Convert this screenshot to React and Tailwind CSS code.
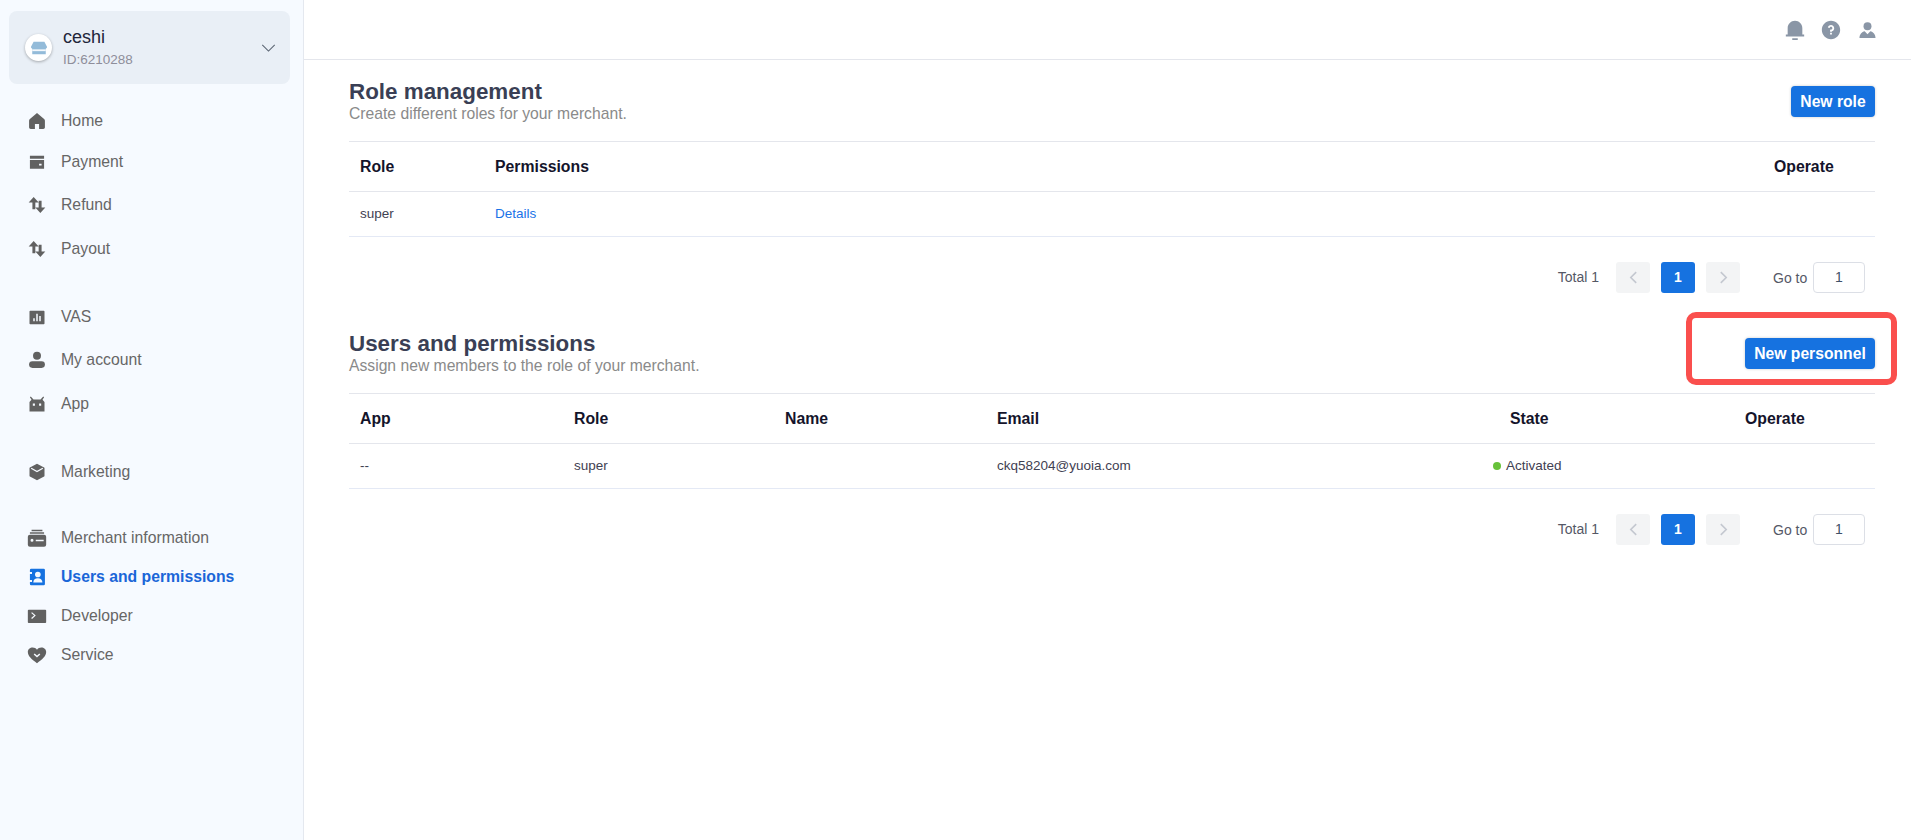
import React from "react";
import { RiBarChartBoxFill, RiNotification3Fill, RiQuestionFill } from "react-icons/ri";

const I = ({ children }) => (
  <svg viewBox="0 0 24 24" width="20" height="20" fill="currentColor" className="shrink-0">{children}</svg>
);
const HomeIcon = () => (
  <I><path d="M12 2.500L3.500 9.500C2.800 10.100 2.500 10.800 2.500 11.700V19.500C2.500 20.600 3.400 21.500 4.500 21.500H9.500V15.500H14.500V21.500H19.500C20.600 21.500 21.500 20.600 21.500 19.500V11.700C21.500 10.800 21.200 10.100 20.500 9.500z" /></I>
);
const WalletIcon = () => (
  <I><path fillRule="evenodd" d="M3.500 4.500h17v3.500h-17zM3.500 9.500h17V20h-17zM14.500 14h3v2.200h-3z" /></I>
);
const ArrowsIcon = () => (
  <I><path d="M8 2.500l6 6.500h-4v8H6.500V9H2zM16 21.500l-6-6.500h4V7h3.500v8H22z" /></I>
);
const PersonIcon = () => (
  <I><circle cx="12" cy="7" r="4.800" /><rect x="2.500" y="13.500" width="19" height="8" rx="4" /></I>
);
const AndroidIcon = () => (
  <I><path fillRule="evenodd" d="M4.500 3l3.300 3.500h8.400L19.500 3l1 .8L18.600 7 21 9.500V21H3V9.500L5.400 7 3.500 3.800zM7 11.500v2.500h2.500v-2.500zM14.500 11.500v2.500H17v-2.500z" /></I>
);
const BoxIcon = () => (
  <I>
    <path d="M12 2l8.500 4.600a1 1 0 0 1 .5.900v9a1 1 0 0 1-.5.900L12 22l-8.500-4.600a1 1 0 0 1-.5-.900v-9a1 1 0 0 1 .5-.900z" />
    <path d="M5 7.500l7 4 7-4" fill="none" stroke="#f6faff" strokeWidth="1.600" />
  </I>
);
const MerchantIcon = () => (
  <I><path fillRule="evenodd" d="M5.500 2h13v2h-13zM3.500 5h17v2h-17zM3.500 8h17A2.500 2.500 0 0 1 23 10.500V20a2.500 2.500 0 0 1-2.500 2.500h-17A2.500 2.500 0 0 1 1 20V10.500A2.500 2.500 0 0 1 3.500 8zM6 13a1.800 1.800 0 1 0 0 3.600A1.800 1.800 0 0 0 6 13zM10.500 14v1.800H20V14z" /></I>
);
const ContactsIcon = () => (
  <I>
    <path fillRule="evenodd" d="M5 2h15a1.500 1.500 0 0 1 1.500 1.500v17A1.500 1.500 0 0 1 20 22H5a1.500 1.500 0 0 1-1.500-1.500V18H6v-2.500H3.500v-7H6V6H3.500V3.500A1.500 1.500 0 0 1 5 2z" />
    <circle cx="13" cy="9" r="3.400" fill="#f6faff" />
    <path d="M7.500 18.500c0-3.200 2.400-5 5.500-5s5.500 1.800 5.500 5z" fill="#f6faff" />
  </I>
);
const TerminalIcon = () => (
  <I>
    <path fillRule="evenodd" d="M2 4.500h20a1 1 0 0 1 1 1v14a1 1 0 0 1-1 1H2a1 1 0 0 1-1-1v-14a1 1 0 0 1 1-1zM5 8.500l3.500 3-3.500 3 1 1 4.500-4-4.500-4z" />
  </I>
);
const HeartIcon = () => (
  <I><path fillRule="evenodd" d="M12 22C6 17.500 1 13.500 1 8.500 1 5 3.700 3 6.800 3c2.100 0 4 1 5.200 2.600C13.200 4 15.100 3 17.200 3 20.300 3 23 5 23 8.500 23 13.500 18 17.500 12 22zM8 11.500l4 3.500 4-3.500-1.200-1.300L12 12.600 9.200 10.200z" /></I>
);
const TopUser = () => (
  <svg viewBox="0 0 18 18" width="17" height="18" fill="currentColor">
    <circle cx="9" cy="5" r="4.200" />
    <path d="M0.500 17.500c0-4 2.500-6.500 5.500-7.300L9 13.500l3-3.300c3 .8 5.500 3.300 5.500 7.300z" />
  </svg>
);

const Row = ({ icon, label, active, className }) => (
  <div className={`flex items-center h-[24px] ${className || ""}`}>
    <span className="w-[61px] pl-[28px] shrink-0">
      <span className={`w-[18px] flex items-center justify-center ${active ? "text-[#1672e0]" : "text-[#616161]"}`}>{icon}</span>
    </span>
    <span className={`text-[15.75px] ${active ? "font-bold text-[#1a66d8]" : "text-[#666666]"}`}>{label}</span>
  </div>
);

const Sidebar = () => (
  <aside className="w-[304px] shrink-0 bg-[#f6faff] border-r border-[#e4e8ef] pt-[11px] min-h-[840px]">
    <div className="mx-[9px] w-[281px] h-[73px] rounded-[8px] bg-[#e9eff6] flex items-center pl-[16px] pr-[14px]">
      <div className="w-[27px] h-[27px] rounded-full bg-white shadow-[0_1px_3px_rgba(0,0,0,0.3)] flex items-center justify-center shrink-0">
        <svg viewBox="0 0 20 20" width="18" height="18" fill="#93bbd9">
          <path d="M4 3h12l3 6a2.300 2.300 0 0 1-1.500 1.800V17h-15v-6.200A2.300 2.300 0 0 1 1 9z" />
          <path d="M2.500 11.500h15v2h-15z" fill="#ffffff" opacity="0.9" />
        </svg>
      </div>
      <div className="ml-[11px] flex-1">
        <div className="text-[18px] leading-[22px] text-[#22253a]">ceshi</div>
        <div className="text-[13.5px] leading-[18px] mt-[3px] text-[#8e8e9a]">ID:6210288</div>
      </div>
      <svg viewBox="0 0 16 9" width="15" height="8" fill="none" stroke="#5a6472" strokeWidth="1.200"><path d="M1 1l7 7 7-7" /></svg>
    </div>
    <nav className="mt-[25px] flex flex-col">
      <Row icon={<HomeIcon />} label="Home" />
      <Row icon={<WalletIcon />} label="Payment" className="mt-[17px]" />
      <Row icon={<ArrowsIcon />} label="Refund" className="mt-[19px]" />
      <Row icon={<ArrowsIcon />} label="Payout" className="mt-[20px]" />
      <Row icon={<RiBarChartBoxFill size={19} />} label="VAS" className="mt-[44px]" />
      <Row icon={<PersonIcon />} label="My account" className="mt-[19px]" />
      <Row icon={<AndroidIcon />} label="App" className="mt-[20px]" />
      <Row icon={<BoxIcon />} label="Marketing" className="mt-[44px]" />
      <Row icon={<MerchantIcon />} label="Merchant information" className="mt-[42px]" />
      <Row icon={<ContactsIcon />} label="Users and permissions" active className="mt-[15px]" />
      <Row icon={<TerminalIcon />} label="Developer" className="mt-[15px]" />
      <Row icon={<HeartIcon />} label="Service" className="mt-[15px]" />
    </nav>
  </aside>
);

const Chevron = ({ d }) => (
  <svg viewBox="0 0 10 14" width="9" height="13" fill="none" stroke="#c4c8d0" strokeWidth="1.800"><path d={d} /></svg>
);

const Pagination = () => (
  <div className="flex justify-end items-center h-[31px] pr-[10px] text-[14px] text-[#555866]">
    <span>Total 1</span>
    <span className="ml-[17px] w-[34px] h-[31px] rounded-[3px] bg-[#f3f4f5] flex items-center justify-center"><Chevron d="M8 1L2 7l6 6" /></span>
    <span className="ml-[11px] w-[34px] h-[31px] rounded-[3px] bg-[#1672e0] text-white font-bold flex items-center justify-center">1</span>
    <span className="ml-[11px] w-[34px] h-[31px] rounded-[3px] bg-[#f3f4f5] flex items-center justify-center"><Chevron d="M2 1l6 6-6 6" /></span>
    <span className="ml-[33px] mt-[1px] w-[35px]">Go to</span>
    <span className="ml-[5px] w-[52px] h-[31px] rounded-[4px] border border-[#dcdfe6] bg-white flex items-center justify-center text-[#3f5168]">1</span>
  </div>
);

const Button = ({ children, className }) => (
  <button className={`h-[31px] rounded-[4px] bg-[#1672e0] text-white font-bold text-[15.7px] shadow-[0_0_3px_rgba(0,0,0,0.2)] ${className}`}>{children}</button>
);

const Heading = ({ title, sub }) => (
  <div>
    <h2 className="text-[22.4px] leading-[28px] font-bold text-[#3a3f55]">{title}</h2>
    <p className="text-[15.7px] leading-[18px] -mt-[1px] text-[#8a8a8a]">{sub}</p>
  </div>
);

const th = "text-[15.8px] font-bold text-[#14142b]";
const td = "text-[13.5px] text-[#3f4152]";

const RoleSection = () => (
  <section>
    <div className="flex justify-between items-start h-[81px] pt-[18px]">
      <Heading title="Role management" sub="Create different roles for your merchant." />
      <Button className="w-[84px] mt-[8px]">New role</Button>
    </div>
    <div className="grid grid-cols-[135px_1fr_101px] pl-[11px] h-[51px] items-center border-y border-[#e4e6ec]">
      <span className={th}>Role</span>
      <span className={th}>Permissions</span>
      <span className={th}>Operate</span>
    </div>
    <div className="grid grid-cols-[135px_1fr_101px] pl-[11px] h-[45px] items-center border-b border-[#e4e9f5]">
      <span className={td}>super</span>
      <span className="text-[13.5px] text-[#1a73e8]">Details</span>
      <span />
    </div>
  </section>
);

const UserSection = () => (
  <section>
    <div className="flex justify-between items-start h-[100px] pt-[37px]">
      <Heading title="Users and permissions" sub="Assign new members to the role of your merchant." />
      <div className="relative mt-[8px]">
        <Button className="w-[130px]">New personnel</Button>
        <div className="absolute -left-[59px] -right-[22px] -top-[26px] -bottom-[16px] border-[6px] border-[#fa4f4d] rounded-[10px] pointer-events-none" />
      </div>
    </div>
    <div className="grid grid-cols-[214px_211px_212px_496px_252px_130px] pl-[11px] h-[51px] items-center border-y border-[#e4e6ec]">
      <span className={th}>App</span>
      <span className={th}>Role</span>
      <span className={th}>Name</span>
      <span className={th}>Email</span>
      <span className={`${th} pl-[17px]`}>State</span>
      <span className={th}>Operate</span>
    </div>
    <div className="grid grid-cols-[214px_211px_212px_496px_252px_130px] pl-[11px] h-[45px] items-center border-b border-[#e4e9f5]">
      <span className={td}>--</span>
      <span className={td}>super</span>
      <span />
      <span className={td}>ckq58204@yuoia.com</span>
      <span className={`${td} flex items-center`}>
        <span className="w-[8px] h-[8px] rounded-full bg-[#67c23a] mr-[5px]" />Activated
      </span>
      <span />
    </div>
  </section>
);

export default function App() {
  return (
    <div className="flex min-h-[840px] bg-white font-['Liberation_Sans',Arial,sans-serif]">
      <Sidebar />
      <main className="flex-1 min-w-0">
        <header className="h-[60px] border-b border-[#e4e6ec] flex items-center justify-end pr-[26px] text-[#8a96a6]">
          <span className="w-[36px] flex justify-center"><RiNotification3Fill size={22} /></span>
          <span className="w-[36px] flex justify-center"><RiQuestionFill size={22} /></span>
          <span className="w-[36px] flex justify-center"><TopUser /></span>
        </header>
        <div className="pl-[45px] pr-[36px]">
          <RoleSection />
          <div className="mt-[25px]"><Pagination /></div>
          <UserSection />
          <div className="mt-[25px]"><Pagination /></div>
        </div>
      </main>
    </div>
  );
}
